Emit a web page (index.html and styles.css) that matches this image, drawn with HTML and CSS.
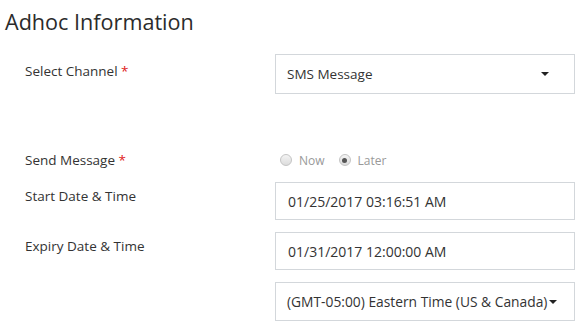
FILE: index.html
```html
<!DOCTYPE html>
<html lang="en">
<head>
  <meta charset="UTF-8" />
  <title>Adhoc Information</title>
  <link rel="stylesheet" href="styles.css">
</head>
<body>

  <h1 class="page-title">Adhoc Information</h1>

  <div class="form">
    <div class="form-row">
      <label class="form-label channel-label">Select Channel <span class="req">*</span></label>
      <div class="field select-box">
        <span>SMS Message</span>
        <span class="caret"></span>
      </div>
    </div>

    <div class="form-row radio-row">
      <label class="form-label">Send Message <span class="req">*</span></label>
      <div class="radios">
        <span class="radio"></span><span class="radio-text">Now</span>
        <span class="radio checked"></span><span class="radio-text">Later</span>
      </div>
    </div>

    <div class="form-row">
      <label class="form-label">Start Date &amp; Time</label>
      <div class="field date-box">01/25/2017 03:16:51 AM</div>
    </div>

    <div class="form-row">
      <label class="form-label">Expiry Date &amp; Time</label>
      <div class="field date-box">01/31/2017 12:00:00 AM</div>
    </div>

    <div class="form-row">
      <span class="form-label"></span>
      <div class="field tz-box">
        <span>(GMT-05:00) Eastern Time (US &amp; Canada)</span>
        <span class="caret"></span>
      </div>
    </div>
  </div>

</body>
</html>
```

FILE: styles.css
```css
body {
  font-family: "Open Sans", "Noto Sans", sans-serif;
  color: #333;
  background-color: white;
  margin: 0;
  padding: 0;
}

.page-title {
  margin: 0;
  padding: 8px 0 0 5px;
  font-size: 21.6px;
  font-weight: normal;
  line-height: 28px;
  color: #2b2b2b;
}

.form {
  padding-top: 18px;
}

.form-row {
  display: grid;
  grid-template-columns: 275px 300px;
  margin-bottom: 12px;
}

.form-label {
  padding: 5px 0 0 25px;
  font-size: 13.5px;
  line-height: 18px;
}

.channel-label {
  padding-top: 8px;
}

.req {
  color: #e02020;
}

.field {
  box-sizing: border-box;
  height: 38px;
  border: 1px solid #d3d7db;
  padding: 0 11px;
  font-size: 13.5px;
  display: flex;
  align-items: center;
}

.select-box {
  height: 40px;
  justify-content: space-between;
  margin-bottom: 45px;
}

.date-box {
  padding-left: 12px;
  font-size: 14px;
}

.tz-box {
  height: 39px;
  font-size: 13.8px;
}

.select-box .caret {
  margin-right: 14px;
}

.caret {
  width: 0;
  height: 0;
  border-left: 4px solid transparent;
  border-right: 4px solid transparent;
  border-top: 4px solid #222;
}

.tz-box .caret {
  margin-left: 2px;
}

.radio-row {
  margin-bottom: 13px;
}

.radio-row .form-label {
  padding-top: 0;
}

.radios {
  display: flex;
  align-items: center;
  height: 18px;
  padding-left: 5px;
  font-size: 12px;
  color: #999;
}

.radio {
  box-sizing: border-box;
  width: 12px;
  height: 12px;
  border-radius: 50%;
  border: 1px solid #c4c4c4;
  background: linear-gradient(#f4f4f4, #dcdcdc);
  margin-right: 7px;
  position: relative;
}

.radio.checked::after {
  content: "";
  position: absolute;
  left: 2.5px;
  top: 2.5px;
  width: 5px;
  height: 5px;
  border-radius: 50%;
  background: #555;
}

.radio-text {
  margin-right: 14px;
}
```
